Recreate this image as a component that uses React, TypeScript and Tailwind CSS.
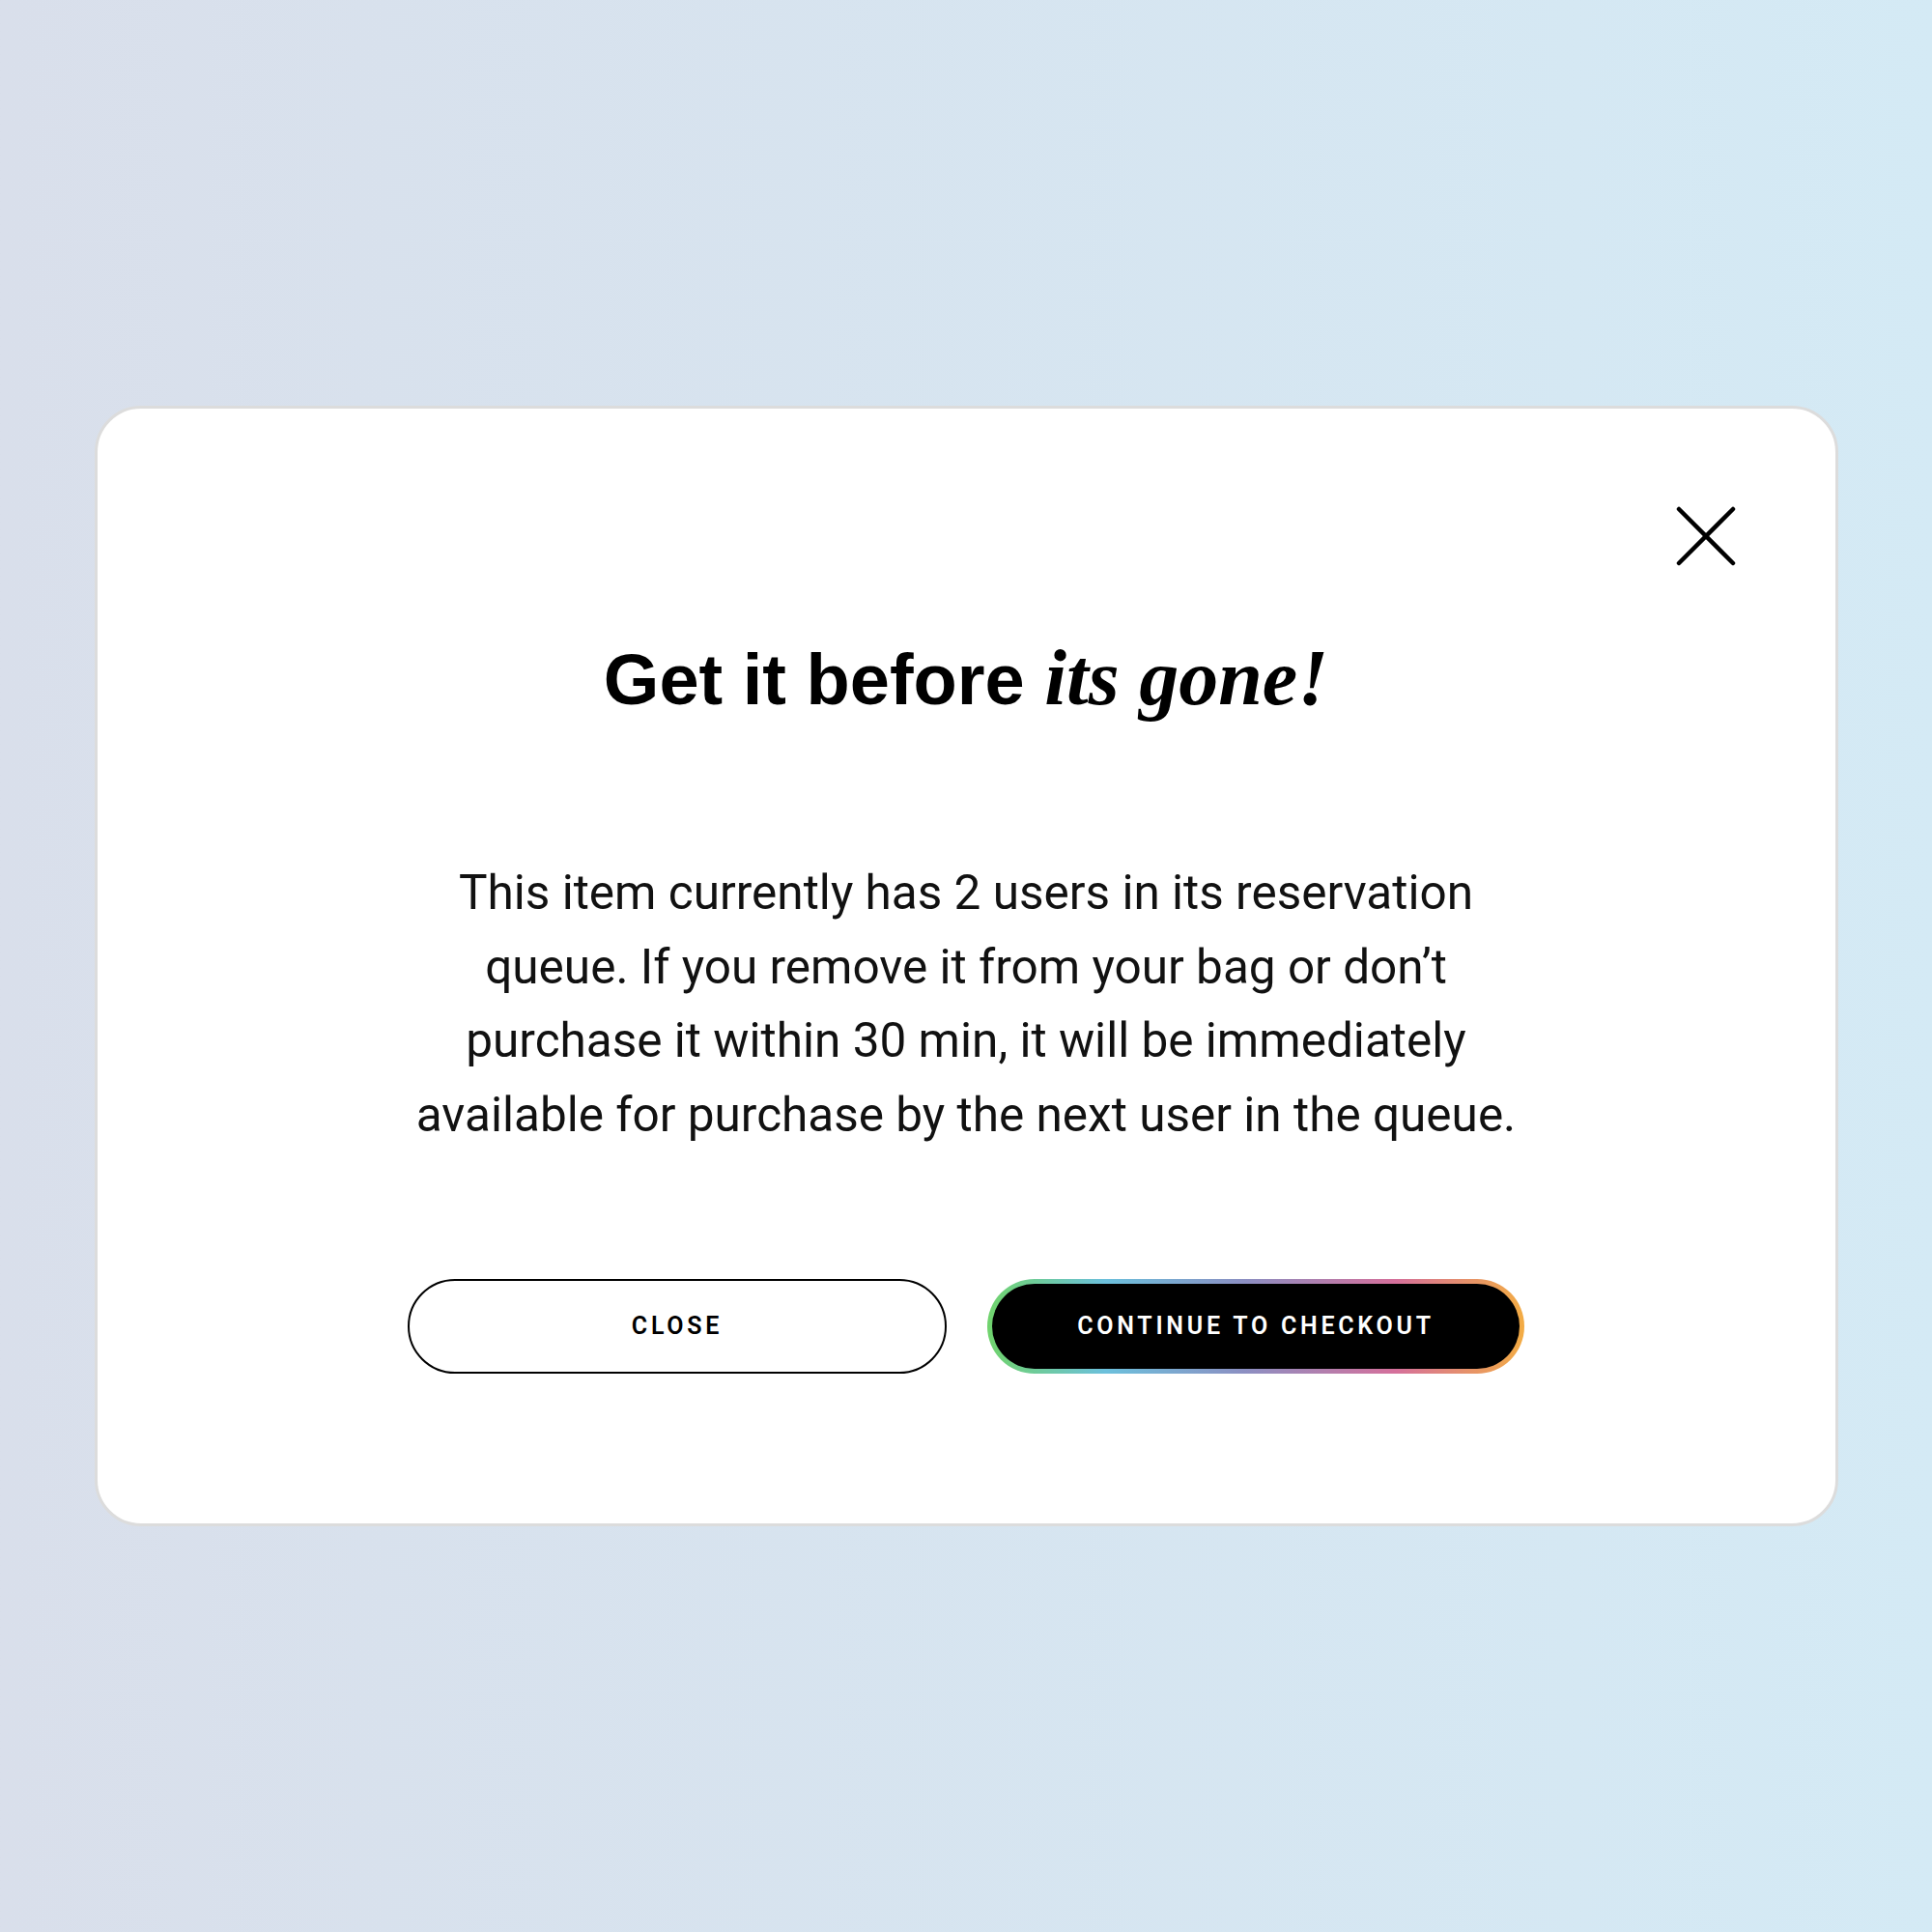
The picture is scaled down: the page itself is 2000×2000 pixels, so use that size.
const bodyFont = { fontFamily: "Roboto, 'Liberation Sans', sans-serif" };

function CloseIcon() {
  return (
    <svg width="64" height="64" viewBox="0 0 64 64" fill="none" stroke="black" strokeWidth="4.5" strokeLinecap="round">
      <line x1="4" y1="4" x2="60" y2="60" />
      <line x1="60" y1="4" x2="4" y2="60" />
    </svg>
  );
}

export default function App() {
  return (
    <div className="flex h-[2000px] w-full items-center justify-center bg-linear-to-r from-[#d9dfeb] to-[#d4eaf5]">
      <div className="relative w-[1805px] rounded-[48px] border-[3px] border-[#dcdcdc] bg-white pt-[238px] pb-[155px]">
        <button
          aria-label="Close dialog"
          className="absolute top-[100px] right-[102px] flex h-[64px] w-[64px] items-center justify-center"
        >
          <CloseIcon />
        </button>

        <h2
          className="text-center text-[74px] leading-none font-bold text-black"
          style={{ fontFamily: "'Liberation Sans', Arial, sans-serif" }}
        >
          Get it before{" "}
          <em className="text-[82px] font-bold" style={{ fontFamily: "'Liberation Serif', serif" }}>
            its gone!
          </em>
        </h2>

        <p
          className="mx-auto mt-[143px] max-w-[1170px] text-center text-[49.5px] leading-[76.5px] text-[#111]"
          style={bodyFont}
        >
          This item currently has 2 users in its reservation queue. If you remove it from your bag or don’t purchase it
          within 30 min, it will be immediately available for purchase by the next user in the queue.
        </p>

        <div className="mt-[132px] flex justify-center gap-[42px]" style={bodyFont}>
          <button className="flex h-[98px] w-[558px] items-center justify-center rounded-full border-[2.5px] border-black bg-white text-[25px] font-semibold tracking-[0.15em] text-black">
            CLOSE
          </button>
          <div className="h-[98px] w-[556px] rounded-full bg-[linear-gradient(90deg,#70d36c_0%,#6cc0dc_22%,#8c8fc2_48%,#d5709b_76%,#f3ac44_100%)] p-[5px]">
            <button className="flex h-full w-full items-center justify-center rounded-full bg-black text-[25px] font-semibold tracking-[0.15em] text-white">
              CONTINUE TO CHECKOUT
            </button>
          </div>
        </div>
      </div>
    </div>
  );
}
